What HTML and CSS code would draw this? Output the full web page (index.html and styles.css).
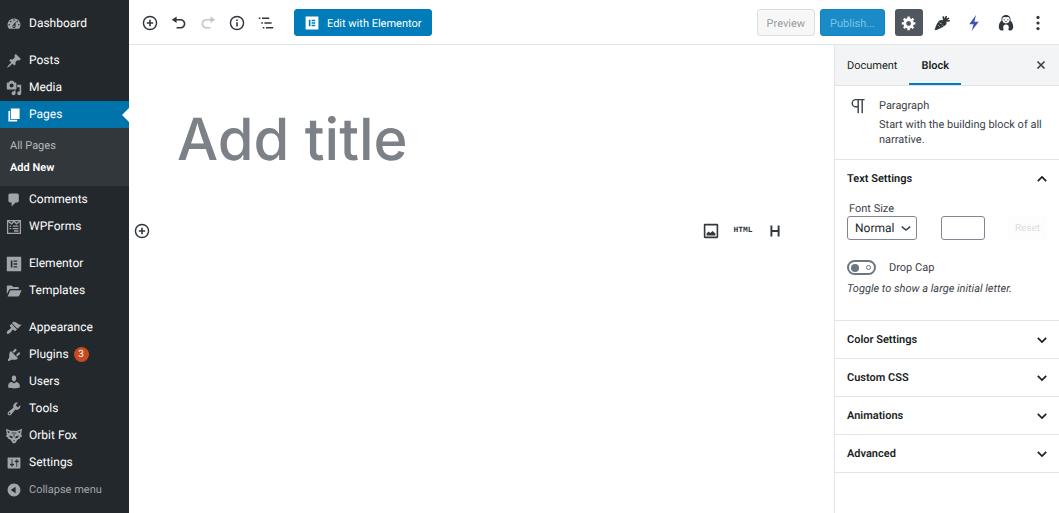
FILE: index.html
```html
<!DOCTYPE html>
<html lang="en">
<head>
  <meta charset="UTF-8" />
  <meta name="viewport" content="width=device-width, initial-scale=1" />
  <title>Add New Page</title>
  <link rel="stylesheet" href="styles.css">
</head>
<body>
  <nav class="sidebar" aria-label="Main menu">
    <ul class="menu">
      <li><a class="menu-item" href="#"><svg class="icon" viewBox="0 0 20 20"><path fill-rule="evenodd" d="M3.76 16h12.48A7.998 7.998 0 0 0 10 3a7.998 7.998 0 0 0-6.24 13zM10 4c.55 0 1 .45 1 1s-.45 1-1 1-1-.45-1-1 .45-1 1-1zM6 6c.55 0 1 .45 1 1s-.45 1-1 1-1-.45-1-1 .45-1 1-1zm8 0c.55 0 1 .45 1 1s-.45 1-1 1-1-.45-1-1 .45-1 1-1zm-5.37 5.55L12 7v6c0 1.1-.9 2-2 2s-2-.9-2-2c0-.57.24-1.08.63-1.45zM4 10c.55 0 1 .45 1 1s-.45 1-1 1-1-.45-1-1 .45-1 1-1zm12 0c.55 0 1 .45 1 1s-.45 1-1 1-1-.45-1-1 .45-1 1-1zm-5 3c0-.55-.45-1-1-1s-1 .45-1 1 .45 1 1 1 1-.45 1-1z"/></svg>Dashboard</a></li>
      <li class="group"><a class="menu-item" href="#"><svg class="icon" viewBox="0 0 20 20"><path d="M10.44 3.02l1.82-1.82 6.36 6.35-1.83 1.82c-1.05-.68-2.48-.57-3.41.36l-.75.75c-.92.93-1.04 2.35-.35 3.41l-1.83 1.82-2.41-2.41-2.8 2.79c-.42.42-3.38 2.71-3.8 2.29s1.86-3.39 2.28-3.81l2.79-2.79L4.1 9.36l1.83-1.82c1.05.69 2.48.57 3.4-.36l.75-.75c.93-.92 1.05-2.35.36-3.41z"/></svg>Posts</a></li>
      <li><a class="menu-item" href="#"><svg class="icon" viewBox="0 0 20 20"><path fill-rule="evenodd" d="M13 11V4c0-.55-.45-1-1-1h-1.67L9 1H5L3.67 3H2c-.55 0-1 .45-1 1v7c0 .55.45 1 1 1h10c.55 0 1-.45 1-1zM7 4.5c1.38 0 2.5 1.12 2.5 2.5S8.38 9.5 7 9.5 4.5 8.38 4.5 7 5.62 4.5 7 4.5zM14 6h5v10.5c0 1.38-1.12 2.5-2.5 2.5S14 17.88 14 16.5s1.12-2.5 2.5-2.5c.17 0 .34.02.5.05V9h-3V6zm-4 8.05V13h2v3.5c0 1.38-1.12 2.5-2.5 2.5S7 17.88 7 16.5 8.12 14 9.5 14c.17 0 .34.02.5.05z"/></svg>Media</a></li>
      <li>
        <a class="menu-item current" href="#" aria-current="page"><svg class="icon" viewBox="0 0 20 20"><path d="M6 15V2h11v13H6zm-1 1h9v2H3V5h2v11z"/></svg>Pages</a>
        <ul class="submenu">
          <li><a href="#">All Pages</a></li>
          <li><a class="active" href="#">Add New</a></li>
        </ul>
      </li>
      <li><a class="menu-item" href="#"><svg class="icon" viewBox="0 0 20 20"><path d="M5 2h9c1.1 0 2 .9 2 2v7c0 1.1-.9 2-2 2h-2l-5 5v-5H5c-1.1 0-2-.9-2-2V4c0-1.1.9-2 2-2z"/></svg>Comments</a></li>
      <li><a class="menu-item" href="#"><svg class="icon line" viewBox="0 0 20 20"><path stroke-width="1.6" d="M2 2h16v16H2zM3 3l4 3 3-3 3 3 4-3M4.5 9h2M8.5 9h7M4.5 12h2M8.5 12h7M10 15h5.5"/></svg>WPForms</a></li>
      <li class="group"><a class="menu-item" href="#"><svg class="icon" viewBox="0 0 20 20"><path fill-rule="evenodd" d="M1 1h18v18H1zM6 5.5v9h2v-9zM9.5 5.5v1.7H14V5.5zM9.5 9.1v1.7H14V9.1zM9.5 12.8v1.7H14v-1.7z"/></svg>Elementor</a></li>
      <li><a class="menu-item" href="#"><svg class="icon" viewBox="0 0 20 20"><path d="M1 14V4c0-.6.4-1 1-1h5l2 2h6c.6 0 1 .4 1 1v1.500H5.500c-.8 0-1.400.4-1.700 1.100zM2 17l3-7c.2-.6.7-1 1.300-1H19.500l-3 7c-.3.600-.8 1-1.500 1z"/></svg>Templates</a></li>
      <li class="group"><a class="menu-item" href="#"><svg class="icon" viewBox="0 0 20 20"><path d="M14.48 11.06L7.41 3.99l1.5-1.5c.5-.56 2.3-.47 3.51.32 1.21.8 1.43 1.28 2.91 2.1 1.18.64 2.45 1.26 4.45.85zm-.71.71L6.7 4.7 4.93 6.47c-.39.39-.39 1.02 0 1.41l1.06 1.06c.39.39.39 1.03 0 1.42-.6.6-1.43 1.11-2.21 1.69-.35.26-.7.53-1.01.84C1.43 14.23.4 16.08 1.4 17.07c.99 1 2.84-.03 4.18-1.36.31-.31.58-.66.85-1.02.57-.78 1.08-1.61 1.69-2.21.39-.39 1.02-.39 1.41 0l1.06 1.06c.39.39 1.02.39 1.41 0z"/></svg>Appearance</a></li>
      <li><a class="menu-item" href="#"><svg class="icon" viewBox="0 0 20 20"><path d="M13.11 4.36L9.87 7.6 8 5.73l3.24-3.24c.35-.34 1.05-.2 1.56.32.52.51.66 1.21.31 1.55zm-8 1.77l.91-1.12 9.01 9.01-1.19.84c-.71.71-2.63 1.16-3.82 1.16H6.14L4.9 17.26c-.59.59-1.54.59-2.12 0-.59-.58-.59-1.53 0-2.12l1.24-1.24v-3.88c0-1.13.4-3.19 1.09-3.89zm7.26 3.97l3.24-3.24c.34-.35 1.04-.21 1.55.31.52.51.66 1.21.31 1.55l-3.24 3.25z"/></svg>Plugins<span class="count">3</span></a></li>
      <li><a class="menu-item" href="#"><svg class="icon" viewBox="0 0 20 20"><path d="M10 9.25c-2.27 0-2.73-3.44-2.73-3.44C7 4.02 7.82 2 9.97 2c2.16 0 2.98 2.02 2.71 3.81 0 0-.41 3.44-2.68 3.44zm0 2.57L12.72 10c2.39 0 4.52 2.33 4.52 4.53v2.49s-3.65 1.13-7.24 1.13c-3.65 0-7.24-1.13-7.24-1.13v-2.49c0-2.25 1.94-4.48 4.47-4.48z"/></svg>Users</a></li>
      <li><a class="menu-item" href="#"><svg class="icon" viewBox="0 0 20 20"><path fill-rule="evenodd" d="M16.68 9.77c-1.34 1.34-3.3 1.67-4.95.99l-5.41 6.52c-.99.99-2.59.99-3.58 0s-.99-2.59 0-3.57l6.52-5.42c-.68-1.65-.35-3.61.99-4.95 1.28-1.28 3.12-1.62 4.72-1.06l-2.89 2.89 2.82 2.82 2.86-2.87c.53 1.58.18 3.39-1.08 4.65zM3.81 16.21c.4.39 1.04.39 1.43 0 .4-.4.4-1.04 0-1.43-.39-.4-1.03-.4-1.43 0-.39.39-.39 1.03 0 1.43z"/></svg>Tools</a></li>
      <li><a class="menu-item" href="#"><svg class="icon" viewBox="0 0 20 20"><path fill-rule="evenodd" d="M0 1l6 2.500h8L20 1l-1 7 1 3-3 .8.500 1.700-3 1L12 18.500l-2 1-2-1-2.500-4-3-1L3 11.800 0 11l1-3zM2 3.500l.6 3.200L5 5zM18 3.500L15 5l2.400 1.700zM4 9.200l1 2.800 3.500 1-.5-2.300zM16 9.200l-4 1.500-.5 2.300 3.500-1zM8.500 15.500L10 17l1.500-1.500zM9.500 5v6h1V5zM7 5.500l.5 2.500 1-2.500zM13 5.500L12.500 8l-1-2.500z"/></svg>Orbit Fox</a></li>
      <li><a class="menu-item" href="#"><svg class="icon" viewBox="0 0 20 20"><path fill-rule="evenodd" d="M18 16V4c0-.55-.45-1-1-1H3c-.55 0-1 .45-1 1v12c0 .55.45 1 1 1h14c.55 0 1-.45 1-1zM8 11h1c.55 0 1 .45 1 1s-.45 1-1 1H8v1.500c0 .28-.22.5-.5.5s-.5-.22-.5-.5V13H6c-.55 0-1-.45-1-1s.45-1 1-1h1V5.500c0-.28.22-.5.5-.5s.5.22.5.5V11zm5-2h-1c-.55 0-1-.45-1-1s.45-1 1-1h1V5.500c0-.28.22-.5.5-.5s.5.22.5.5V7h1c.55 0 1 .45 1 1s-.45 1-1 1h-1v5.500c0 .28-.22.5-.5.5s-.5-.22-.5-.5V9z"/></svg>Settings</a></li>
      <li><button class="menu-item collapse" type="button"><svg class="icon" viewBox="0 0 20 20"><path fill-rule="evenodd" d="M10 2c4.400 0 8 3.600 8 8s-3.600 8-8 8-8-3.600-8-8 3.600-8 8-8zm2 12V6l-6 4z"/></svg>Collapse menu</button></li>
    </ul>
  </nav>

  <div class="editor">
    <header class="toolbar">
      <div class="tools">
        <button class="tool" type="button" aria-label="Add block"><svg class="icon line" viewBox="0 0 20 20"><circle cx="10" cy="10" r="8.2" stroke-width="1.800"/><path stroke-width="2" d="M10 6v8M6 10h8"/></svg></button>
        <button class="tool" type="button" aria-label="Undo"><svg class="icon" viewBox="0 0 20 20"><path d="M12 5H7V2L1 6l6 4V7h5c2.200 0 4 1.800 4 4s-1.800 4-4 4H7v2h5c3.300 0 6-2.700 6-6s-2.700-6-6-6z"/></svg></button>
        <button class="tool" type="button" aria-label="Redo" disabled><svg class="icon" viewBox="0 0 20 20"><path d="M8 5h5V2l6 4-6 4V7H8c-2.200 0-4 1.800-4 4s1.800 4 4 4h5v2H8c-3.300 0-6-2.700-6-6s2.700-6 6-6z"/></svg></button>
        <button class="tool" type="button" aria-label="Content structure"><svg class="icon line" viewBox="0 0 20 20"><circle cx="10" cy="10" r="8.2" stroke-width="1.800"/><path stroke-width="2" d="M10 9v5.500M10 5.500v2"/></svg></button>
        <button class="tool" type="button" aria-label="Block navigation"><svg class="icon line" viewBox="0 0 20 20"><path stroke-width="2" d="M1 4h2M5 4h9M4 10h2M8 10h9M6 16h2M10 16h9"/></svg></button>
        <button class="btn primary elementor" type="button"><svg class="icon" viewBox="0 0 20 20"><path fill-rule="evenodd" d="M2 2h16v16H2zM6 6v8h2V6zM9.500 6v1.700H14V6zM9.500 9.200v1.700H14V9.200zM9.500 12.300V14H14v-1.700z"/></svg>Edit with Elementor</button>
      </div>
      <div class="actions">
        <button class="btn preview" type="button" disabled>Preview</button>
        <button class="btn primary publish" type="button" disabled>Publish...</button>
        <button class="tool wide pressed" type="button" aria-label="Settings"><svg class="icon" viewBox="0 0 20 20"><path fill-rule="evenodd" d="M18 12h-2.180c-.17.7-.44 1.350-.81 1.930l1.540 1.540-2.100 2.100-1.540-1.540c-.58.36-1.230.63-1.910.79V19H8v-2.180c-.68-.16-1.330-.43-1.910-.79l-1.540 1.540-2.120-2.120 1.540-1.540c-.36-.58-.63-1.230-.79-1.910H1V9.030h2.170c.16-.7.44-1.350.8-1.940L2.430 5.550l2.100-2.100 1.540 1.540c.58-.37 1.240-.64 1.930-.81V2h3v2.180c.68.16 1.330.43 1.910.79l1.540-1.540 2.120 2.120-1.540 1.540c.36.59.64 1.240.8 1.940H18V12zm-8.500 1.500c1.660 0 3-1.340 3-3s-1.340-3-3-3-3 1.340-3 3 1.340 3 3 3z"/></svg></button>
        <button class="tool wide" type="button" aria-label="Carrot"><svg class="icon" viewBox="0 0 20 20"><path d="M1 19c0-2 3-10 6-12 1.500-1 3-1 4.300-.2L10.500 2l2-.5.8 3L14.500 1l1.800.6-.6 2.700L18.500 3l.8 1.500-2.500 1.600 3 .2-.2 1.800-4.300.2c.8 1.500.5 3-.7 4.200C12 15 4 19 1 19z"/><path class="cut" d="M7.500 9.500l2 2M11 13l1.500 1.500M5.500 13l1.500 1.500"/></svg></button>
        <button class="tool wide bolt" type="button" aria-label="Bolt"><svg class="icon" viewBox="0 0 20 20"><path d="M12.500 0L4 11.500h5.500L7 20l9-11.500h-5.500z"/></svg></button>
        <button class="tool wide" type="button" aria-label="Penguin"><svg class="icon" viewBox="0 0 20 20"><path fill-rule="evenodd" d="M10 0c4 0 6.200 3 5.500 7 2.300 1.700 3.500 4.500 3.500 8 0 1.700-.7 3.200-2 4-1.500.7-3 .8-3.800-.3-.6-1 .3-2 .3-3.200 0-2-1.300-3.500-3.500-3.500S6.500 13.500 6.500 15.500c0 1.200.9 2.200.3 3.200C6 19.800 4.500 19.700 3 19c-1.300-.8-2-2.300-2-4 0-3.500 1.200-6.300 3.500-8C3.800 3 6 0 10 0zM10 3C7.500 1.500 5 3 5.300 6c.2 2.800 2.200 4.500 4.700 4.500s4.500-1.700 4.700-4.500C15 3 12.500 1.500 10 3z"/><path d="M7 5.200h1.500v1.500H7zM11.500 5.200H13v1.500h-1.500zM8.500 7.500h3L10 9.200z"/></svg></button>
        <button class="tool wide" type="button" aria-label="More"><svg class="icon" viewBox="0 0 20 20"><circle cx="10" cy="3" r="2"/><circle cx="10" cy="10" r="2"/><circle cx="10" cy="17" r="2"/></svg></button>
      </div>
    </header>

    <div class="body">
      <main class="canvas">
        <input class="title" type="text" placeholder="Add title" aria-label="Title">
        <div class="block">
          <button class="tool" type="button" aria-label="Add block here"><svg class="icon line" viewBox="0 0 20 20"><circle cx="10" cy="10" r="8.2" stroke-width="1.800"/><path stroke-width="2" d="M10 6v8M6 10h8"/></svg></button>
          <div class="shortcuts">
            <button class="tool wide" type="button" aria-label="Image"><svg class="icon" viewBox="0 0 20 20"><path fill-rule="evenodd" d="M2.500 1h15c.8 0 1.500.7 1.500 1.500v15c0 .8-.7 1.500-1.500 1.500h-15C1.700 19 1 18.300 1 17.500v-15C1 1.700 1.700 1 2.500 1zM3 3v14h14V3zM4.500 15.500V13L7 10.500l2 2L12 10l3.500 3v2.500z"/></svg></button>
            <button class="tool wide code" type="button">HTML</button>
            <button class="tool wide" type="button" aria-label="Heading"><svg class="icon line" viewBox="0 0 20 20"><path stroke-width="2.400" d="M5.500 3v14M14.500 3v14M5.500 10h9"/></svg></button>
          </div>
        </div>
      </main>

      <aside class="panel">
        <div class="tabs">
          <button class="tab" type="button">Document</button>
          <button class="tab selected" type="button">Block</button>
          <button class="close" type="button" aria-label="Close settings"><svg class="icon line" viewBox="0 0 20 20"><path stroke-width="2.400" d="M5 5l10 10M15 5L5 15"/></svg></button>
        </div>
        <section class="card">
          <svg class="icon line" viewBox="0 0 20 20"><path stroke-width="1.800" d="M17 2H6a4.500 4.500 0 0 0 0 9h3M9 2v17M14 2v17"/></svg>
          <div>
            <h2>Paragraph</h2>
            <p>Start with the building block of all narrative.</p>
          </div>
        </section>
        <section class="section">
          <button class="section-head" type="button" aria-expanded="true">Text Settings<svg class="icon line" viewBox="0 0 20 20"><path stroke-width="2.400" d="M4 13l6-6 6 6"/></svg></button>
          <div class="section-body">
            <label class="size-label" for="fontSize">Font Size</label>
            <div class="size-row">
              <div class="select">
                <select id="fontSize"><option>Normal</option><option>Large</option></select>
                <svg class="icon line" viewBox="0 0 20 20"><path stroke-width="2.200" d="M4 8l6 5 6-5"/></svg>
              </div>
              <input class="custom-size" type="text" aria-label="Custom size">
              <button class="reset" type="button" disabled>Reset</button>
            </div>
            <div class="toggle-row">
              <input class="toggle" id="dropCap" type="checkbox">
              <label for="dropCap">Drop Cap</label>
            </div>
            <p class="help">Toggle to show a large initial letter.</p>
          </div>
        </section>
        <section class="section"><button class="section-head" type="button">Color Settings<svg class="icon line" viewBox="0 0 20 20"><path stroke-width="2.400" d="M4 7l6 6 6-6"/></svg></button></section>
        <section class="section"><button class="section-head" type="button">Custom CSS<svg class="icon line" viewBox="0 0 20 20"><path stroke-width="2.400" d="M4 7l6 6 6-6"/></svg></button></section>
        <section class="section"><button class="section-head" type="button">Animations<svg class="icon line" viewBox="0 0 20 20"><path stroke-width="2.400" d="M4 7l6 6 6-6"/></svg></button></section>
        <section class="section"><button class="section-head" type="button">Advanced<svg class="icon line" viewBox="0 0 20 20"><path stroke-width="2.400" d="M4 7l6 6 6-6"/></svg></button></section>
      </aside>
    </div>
  </div>
</body>
</html>
```
FILE: styles.css
```css
* {
  box-sizing: border-box;
}
body {
  margin: 0;
  display: flex;
  min-height: 100vh;
  background: #fff;
  color: #3c434a;
  font: 11px/15px Roboto, "Liberation Sans", sans-serif;
  text-rendering: geometricPrecision;
}
ul {
  list-style: none;
  margin: 0;
  padding: 0;
}
h2, p {
  margin: 0;
  font-size: 11px;
  font-weight: 400;
}
button, input, select {
  font: inherit;
  color: inherit;
  margin: 0;
  text-rendering: inherit;
}
button {
  background: none;
  border: 0;
  padding: 0;
  cursor: pointer;
}
.icon {
  width: 16px;
  height: 16px;
  flex: none;
  fill: currentColor;
}
.line {
  fill: none;
  stroke: currentColor;
}

/* left menu */
.sidebar {
  flex: 0 0 129px;
  padding-top: 10px;
  background: #23282d;
}
.group {
  margin-top: 10px;
}
.menu-item {
  position: relative;
  display: flex;
  align-items: center;
  gap: 7px;
  width: 100%;
  height: 27px;
  padding-left: 6px;
  color: #fff;
  font-size: 12px;
  text-decoration: none;
}
.menu-item .icon {
  color: #a0a5aa;
}
.menu-item.current {
  background: #0073aa;
}
.menu-item.current .icon {
  color: #fff;
}
.current::after {
  content: "";
  position: absolute;
  right: 0;
  top: 7px;
  border: 7px solid transparent;
  border-left-width: 0;
  border-right-color: #fff;
}
.submenu {
  padding: 7px 10px;
  background: #32373c;
}
.submenu a {
  display: block;
  color: #b4b9be;
  line-height: 22px;
  text-decoration: none;
}
.submenu .active {
  color: #fff;
  font-weight: 600;
}
.count {
  width: 15px;
  margin-left: -2px;
  border-radius: 8px;
  background: #ca4a1f;
  color: #fff;
  font-size: 10px;
  text-align: center;
}
.menu-item.collapse {
  color: #a0a5aa;
  font-size: 11px;
}

/* top bar */
.editor {
  flex: 1;
  min-width: 0;
  display: flex;
  flex-direction: column;
}
.toolbar {
  display: flex;
  justify-content: space-between;
  align-items: center;
  height: 45px;
  padding: 1px 5px 0 6px;
  border-bottom: 1px solid #e2e4e7;
}
.tools, .actions, .shortcuts {
  display: flex;
  align-items: center;
}
.tool {
  display: flex;
  align-items: center;
  justify-content: center;
  width: 29px;
  height: 27px;
  color: #32373c;
}
.tool:disabled {
  color: #c3c6ca;
}
.wide {
  width: 32px;
}
.btn {
  display: flex;
  align-items: center;
  height: 27px;
  padding: 1px 9px 0;
  border: 1px solid #ddd;
  border-radius: 3px;
}
.primary {
  border-color: #007cba;
  background: #007cba;
  color: #fff;
}
.elementor {
  gap: 7px;
  margin-left: 14px;
}
.preview {
  margin-right: 5px;
  background: #f7f7f7;
  color: #999da1;
}
.publish {
  margin-right: 10px;
  border-color: #1482bd;
  background: #1a8bc6;
  color: #7fc5e6;
}
.pressed {
  width: 28px;
  margin-right: 3px;
  border-radius: 3px;
  background: #50575e;
  color: #fff;
}
.bolt {
  color: #4054b2;
}
.cut {
  stroke: #fff;
}

/* writing area */
.body {
  flex: 1;
  display: flex;
}
.canvas {
  flex: 1;
  min-width: 0;
  padding-top: 62px;
}
.title {
  display: block;
  width: 100%;
  height: 64px;
  padding: 0 48px;
  border: 0;
  outline: 0;
  font-family: Inter, sans-serif;
  font-size: 58px;
  font-weight: 500;
}
.title::placeholder {
  color: #7c8087;
}
.block {
  display: flex;
  justify-content: space-between;
  margin-top: 46px;
  padding-right: 43px;
}
.block > .tool {
  width: 26px;
}
.code {
  font: bold 8px "Liberation Mono", monospace;
}

/* block settings */
.panel {
  flex: 0 0 225px;
  border-left: 1px solid #e2e4e7;
}
.tabs {
  display: flex;
  height: 41px;
  border-bottom: 1px solid #e2e4e7;
  background: #f3f4f5;
}
.tab {
  padding: 2px 12px 0;
  border-bottom: 2px solid transparent;
  color: #191e23;
}
.selected {
  border-color: #007cba;
  font-weight: 600;
}
.close {
  display: flex;
  align-items: center;
  margin-left: auto;
  padding-right: 11px;
}
.close .icon {
  width: 14px;
}
.card {
  display: flex;
  gap: 12px;
  padding: 12px 16px;
  border-bottom: 1px solid #e2e4e7;
}
.card h2 {
  margin-bottom: 4px;
}
.section {
  border-bottom: 1px solid #e2e4e7;
}
.section-head {
  display: flex;
  justify-content: space-between;
  align-items: center;
  width: 100%;
  height: 37px;
  padding: 0 10px 0 12px;
  color: #191e23;
  font-weight: 600;
}
.section-head .icon {
  width: 14px;
}
.section-body {
  padding: 4px 12px 24px;
}
.size-label {
  display: block;
  padding-left: 2px;
}
.size-row {
  display: flex;
  justify-content: space-between;
  gap: 23px;
}
.select {
  display: grid;
  align-items: center;
  width: 70px;
}
.select > * {
  grid-area: 1 / 1;
}
.select .icon {
  width: 14px;
  justify-self: end;
  margin-right: 4px;
  pointer-events: none;
}
select, .custom-size {
  height: 24px;
  border: 1px solid #7e8993;
  border-radius: 3px;
  background: #fff;
}
select {
  appearance: none;
  width: 100%;
  padding: 0 7px;
  color: #23282d;
  font-size: 12px;
}
.custom-size {
  width: 44px;
}
.reset {
  width: 39px;
  background: #fdfdfd;
  color: #dcdee0;
  font-size: 10px;
}
.toggle-row {
  display: flex;
  align-items: center;
  gap: 13px;
  margin-top: 20px;
}
.toggle {
  appearance: none;
  display: flex;
  align-items: center;
  justify-content: space-between;
  width: 29px;
  height: 15px;
  padding: 0 3px 0 2px;
  border: 2px solid #6c7781;
  border-radius: 8px;
}
.toggle::before {
  content: "";
  width: 8px;
  height: 8px;
  border-radius: 4px;
  background: #6c7781;
}
.toggle::after {
  content: "";
  width: 3px;
  height: 3px;
  border: 1px solid #6c7781;
  border-radius: 3px;
}
.help {
  margin-top: 6px;
  font-style: italic;
}
```
